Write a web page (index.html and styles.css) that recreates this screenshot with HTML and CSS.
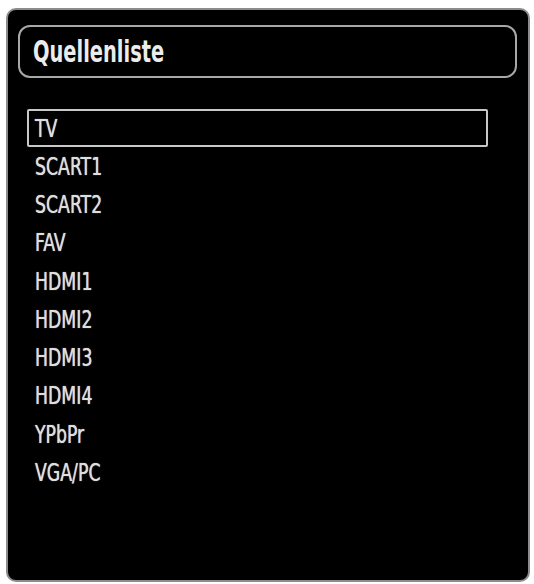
FILE: index.html
```html
<!DOCTYPE html>
<html lang="de">
<head>
    <meta charset="UTF-8">
    <meta name="viewport" content="width=device-width, initial-scale=1.0">
    <title>Quellenliste</title>
    <link rel="stylesheet" href="styles.css">
</head>
<body>
    <div class="panel">
        <div class="panel-header">
            <h1>Quellenliste</h1>
        </div>
        <ul class="source-list">
            <li class="selected"><span>TV</span></li>
            <li><span>SCART1</span></li>
            <li><span>SCART2</span></li>
            <li><span>FAV</span></li>
            <li><span>HDMI1</span></li>
            <li><span>HDMI2</span></li>
            <li><span>HDMI3</span></li>
            <li><span>HDMI4</span></li>
            <li><span>YPbPr</span></li>
            <li><span>VGA/PC</span></li>
        </ul>
    </div>
</body>
</html>
```

FILE: styles.css
```css
:root {
    --background: #ffffff;
    --panel: #000000;
    --text-color: #dedede;
    --frame: #8c8c8c;
}
* {
    box-sizing: border-box;
}
body {
    margin: 0;
    padding: 8px 4px 2px 6px;
    background-color: var(--background);
    font-family: "DejaVu Sans Condensed", "DejaVu Sans", sans-serif;
    color: var(--text-color);
    height: 100vh;
}
.panel {
    height: 100%;
    background-color: var(--panel);
    border: 2px solid var(--frame);
    border-radius: 10px;
    padding: 15px 11px 0 10px;
}
.panel-header {
    height: 53px;
    border: 2px solid #a8a8a8;
    border-radius: 12px;
    padding-left: 13px;
    display: flex;
    align-items: center;
}
/* tv font is narrower than anything installed, squeeze it */
.panel-header h1 {
    margin: 0;
    font-size: 30px;
    font-weight: 600;
    color: #ececec;
    transform: scaleX(0.72);
    transform-origin: left center;
}
.source-list {
    list-style: none;
    margin: 31px 0 0 9px;
    padding: 0;
    width: 461px;
}
.source-list li {
    height: 38.3px;
    border: 2px solid transparent;
    padding-left: 6px;
    display: flex;
    align-items: center;
    font-size: 25px;
}
.source-list li span {
    display: inline-block;
    transform: scaleX(0.77);
    transform-origin: left center;
    text-shadow: 0 0 1px #dedede;
}
.source-list li.selected {
    height: 38px;
    border-color: #c8c8c8;
    border-radius: 2px;
}
```
